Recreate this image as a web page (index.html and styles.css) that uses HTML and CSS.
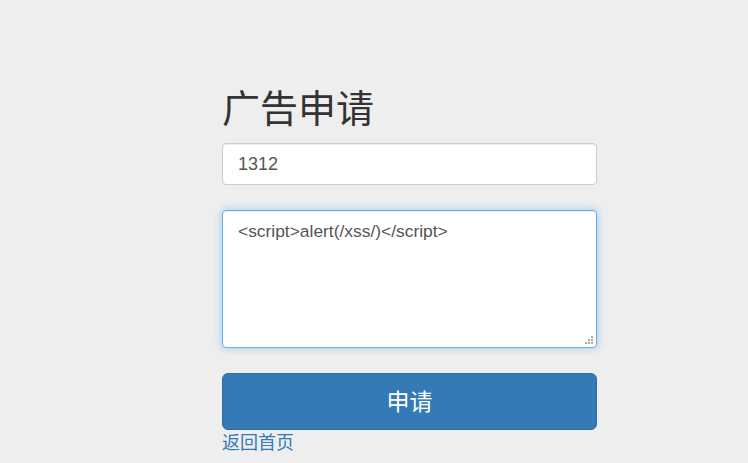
FILE: index.html
```html
<!DOCTYPE html>
<html lang="zh-CN">
<head>
<meta charset="utf-8">
<title>广告申请</title>
<link rel="stylesheet" href="styles.css">
</head>
<body>
<main class="page">
  <form class="apply-form">
    <h1 class="title">广告申请</h1>
    <input class="field" type="text" value="1312">
    <div class="area-wrap">
      <textarea class="field area is-focused">&lt;script&gt;alert(/xss/)&lt;/script&gt;</textarea>
      <span class="grip" aria-hidden="true">
        <i></i><i></i><i></i><i></i><i></i><i></i>
      </span>
    </div>
    <button class="submit" type="button">申请</button>
    <a class="back" href="#">返回首页</a>
  </form>
</main>
</body>
</html>
```
FILE: styles.css
```css
* { box-sizing: border-box; }
html, body {
  margin: 0;
  padding: 0;
  background: #eeeeee;
}
body {
  font-family: "Liberation Sans", "Noto Sans CJK SC", sans-serif;
  color: #333;
  font-size: 14px;
  line-height: 1.42857;
}
.page {
  padding-top: 79px;
  padding-left: 222px;
}
.apply-form {
  width: 375px;
  display: flex;
  flex-direction: column;
}
.title {
  margin: 0 0 10px 0;
  font-family: "Noto Sans CJK SC", sans-serif;
  font-weight: 400;
  font-size: 38px;
  line-height: 54px;
  color: #333;
  letter-spacing: 0;
}
.field {
  display: block;
  width: 100%;
  height: 42px;
  padding: 0 15px;
  font-family: "Liberation Sans", "Noto Sans CJK SC", sans-serif;
  font-size: 18px;
  color: #555;
  background: #fff;
  border: 1px solid #ccc;
  border-radius: 4px;
  box-shadow: inset 0 1px 1px rgba(0,0,0,.075);
  outline: none;
}
.area-wrap {
  position: relative;
  margin-top: 25px;
}
.area {
  height: 138px;
  padding: 8px 15px;
  font-size: 17.4px;
  line-height: 24px;
  resize: none;
}
.area.is-focused {
  border-color: #66afe9;
  box-shadow: inset 0 1px 1px rgba(0,0,0,.075), 0 0 8px rgba(102,175,233,.6);
}
.grip {
  position: absolute;
  right: 4px;
  bottom: 4px;
  width: 8px;
  height: 8px;
}
.grip i {
  position: absolute;
  width: 2px;
  height: 2px;
  background: #ababab;
}
.grip i:nth-child(1) { right: 0; top: 0; }
.grip i:nth-child(2) { right: 0; top: 3px; }
.grip i:nth-child(3) { right: 3px; top: 3px; }
.grip i:nth-child(4) { right: 0; top: 6px; }
.grip i:nth-child(5) { right: 3px; top: 6px; }
.grip i:nth-child(6) { right: 6px; top: 6px; }
.submit {
  margin-top: 25px;
  height: 57px;
  width: 100%;
  background: #337ab7;
  border: 1px solid #2e6da4;
  border-radius: 6px;
  color: #fff;
  font-family: "Noto Sans CJK SC", sans-serif;
  font-size: 23px;
  line-height: 1;
  padding: 0 0 2px 0;
  cursor: pointer;
}
.back {
  align-self: flex-start;
  font-family: "Noto Sans CJK SC", sans-serif;
  font-size: 18px;
  line-height: 23px;
  color: #337ab7;
  text-decoration: none;
}
```
